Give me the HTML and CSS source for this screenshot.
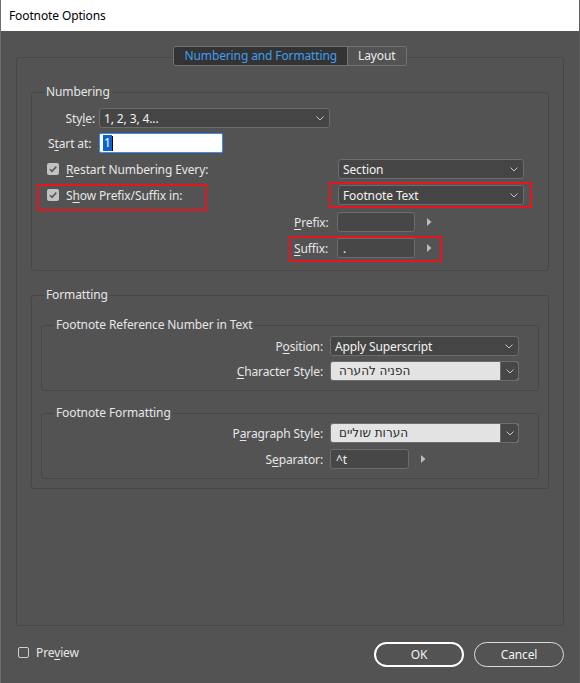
FILE: index.html
```html
<!DOCTYPE html>
<html lang="en">
<head>
<meta charset="utf-8">
<title>Footnote Options</title>
<link rel="stylesheet" href="styles.css">
</head>
<body>
<div class="window">
  <div class="titlebar">Footnote Options</div>
  <div class="dialog">
    <div class="tabs">
      <div class="tabstrip">
        <div class="tab active">Numbering and Formatting</div>
        <div class="tab">Layout</div>
      </div>
    </div>
    <div class="panel">
      <div class="group numbering">
        <div class="legend">Numbering</div>
        <div class="row row-style">
          <span class="lab lab-right">Sty<u>l</u>e:</span>
          <div class="select w-style"><span>1, 2, 3, 4...</span><svg class="chev" width="8" height="5" viewBox="0 0 8 5"><path d="M0.5 0.5 L4 4 L7.5 0.5" /></svg></div>
        </div>
        <div class="row row-start">
          <span class="lab lab-left">S<u>t</u>art at:</span>
          <div class="input focus"><span class="sel">1</span><span class="caret"></span></div>
        </div>
        <div class="row row-check">
          <span class="cb checked"><svg width="12" height="12" viewBox="0 0 12 12"><path d="M2.8 6.2 L5 8.4 L9.3 3.6" /></svg></span>
          <span class="cb-label"><u>R</u>estart Numbering Every:</span>
          <div class="select w-right"><span>Section</span><svg class="chev" width="8" height="5" viewBox="0 0 8 5"><path d="M0.5 0.5 L4 4 L7.5 0.5" /></svg></div>
        </div>
        <div class="row row-check row-show">
          <span class="cb checked"><svg width="12" height="12" viewBox="0 0 12 12"><path d="M2.8 6.2 L5 8.4 L9.3 3.6" /></svg></span>
          <span class="cb-label">S<u>h</u>ow Prefix/Suffix in:</span>
          <div class="select w-right"><span>Footnote Text</span><svg class="chev" width="8" height="5" viewBox="0 0 8 5"><path d="M0.5 0.5 L4 4 L7.5 0.5" /></svg></div>
        </div>
        <div class="row row-affix row-prefix">
          <span class="lab-affix"><u>P</u>refix:</span>
          <div class="input field w-affix"></div>
          <svg class="tri" width="5" height="8" viewBox="0 0 5 8"><path d="M0 0 L4.5 4 L0 8 Z" /></svg>
        </div>
        <div class="row row-affix row-suffix">
          <span class="lab-affix"><u>S</u>uffix:</span>
          <div class="input field w-affix"><span>.</span></div>
          <svg class="tri" width="5" height="8" viewBox="0 0 5 8"><path d="M0 0 L4.5 4 L0 8 Z" /></svg>
        </div>
        <div class="mark mark-show"></div>
        <div class="mark mark-text"></div>
        <div class="mark mark-suffix"></div>
      </div>

      <div class="group formatting">
        <div class="legend">Formatting</div>
        <div class="group sub sub-ref">
          <div class="legend">Footnote Reference Number in Text</div>
          <div class="frow frow-first">
            <span class="flab">P<u>o</u>sition:</span>
            <div class="select"><span>Apply Superscript</span><svg class="chev" width="8" height="5" viewBox="0 0 8 5"><path d="M0.5 0.5 L4 4 L7.5 0.5" /></svg></div>
          </div>
          <div class="frow">
            <span class="flab"><u>C</u>haracter Style:</span>
            <div class="select light"><span class="heb" dir="rtl">הפניה להערה</span><span class="drop"><svg class="chev" width="8" height="5" viewBox="0 0 8 5"><path d="M0.5 0.5 L4 4 L7.5 0.5" /></svg></span></div>
          </div>
        </div>
        <div class="group sub sub-fmt">
          <div class="legend">Footnote Formatting</div>
          <div class="frow frow-first2">
            <span class="flab">P<u>a</u>ragraph Style:</span>
            <div class="select light"><span class="heb" dir="rtl">הערות  שוליים</span><span class="drop"><svg class="chev" width="8" height="5" viewBox="0 0 8 5"><path d="M0.5 0.5 L4 4 L7.5 0.5" /></svg></span></div>
          </div>
          <div class="frow">
            <span class="flab">S<u>e</u>parator:</span>
            <div class="ctl">
              <div class="input field w-sep"><span>^t</span></div>
              <svg class="tri" width="5" height="8" viewBox="0 0 5 8"><path d="M0 0 L4.5 4 L0 8 Z" /></svg>
            </div>
          </div>
        </div>
      </div>
    </div>

    <div class="footer">
      <div class="preview">
        <span class="cb empty"></span>
        <span class="cb-label">Pre<u>v</u>iew</span>
      </div>
      <div class="btn ok">OK</div>
      <div class="btn cancel">Cancel</div>
    </div>
  </div>
</div>
</body>
</html>
```

FILE: styles.css
```css
* {
  box-sizing: border-box;
}

html, body {
  margin: 0;
  padding: 0;
}

body {
  width: 580px;
  height: 683px;
  overflow: hidden;
  background: #535353;
  font-family: "Noto Sans", "Segoe UI", "DejaVu Sans", sans-serif;
  font-size: 12px;
  letter-spacing: -0.12px;
  color: #e6e6e6;
}

u {
  text-decoration: underline;
  text-underline-offset: 2px;
}

.window {
  width: 580px;
  height: 683px;
  border-left: 1px solid #6e6e6e;
  border-right: 1px solid #5e5e5e;
  background: #535353;
}

.titlebar {
  height: 31px;
  line-height: 31px;
  background: #ffffff;
  color: #000000;
  padding-left: 8px;
}

.dialog {
  padding: 15px 15px 0 15px;
}

/* Tabs */
.tabs {
  display: flex;
  justify-content: center;
  margin-bottom: -9px;
  position: relative;
  z-index: 1;
}

.tabstrip {
  display: flex;
  height: 20px;
  border: 1px solid #737373;
  border-radius: 3px;
  overflow: hidden;
  background: #535353;
}

.tab {
  line-height: 18px;
  padding: 0 10px;
  color: #ececec;
}

.tab.active {
  background: #333333;
  color: #3f9ef0;
}

.tab + .tab {
  border-left: 1px solid #737373;
}

/* Panel and groups */
.panel {
  height: 569px;
  border: 1px solid #474747;
  border-radius: 3px;
  padding: 34px 14px 0 14px;
}

.group {
  border: 1px solid #474747;
  border-radius: 3px;
  position: relative;
}

.legend {
  width: fit-content;
  margin: -9px 0 0 12px;
  padding: 0 2px;
  line-height: 16px;
  background: #535353;
  color: #e6e6e6;
}

.numbering {
  padding-bottom: 12px;
}

.row {
  display: flex;
  align-items: center;
  height: 20px;
}

.row-style {
  margin-top: 8px;
}

.row-start {
  margin-top: 5px;
}

.row-check {
  margin-top: 6px;
  padding-left: 15px;
  padding-right: 24px;
}

.row-prefix {
  margin-top: 7px;
}

.row-suffix {
  margin-top: 6px;
}

.row-affix {
  margin-left: 262px;
}

.lab {
  width: 67px;
  flex: none;
}

.lab-right {
  text-align: right;
  padding-right: 4px;
}

.lab-left {
  padding-left: 16px;
}

.lab-affix {
  width: 43px;
  flex: none;
}

/* Controls */
.select {
  display: flex;
  align-items: center;
  justify-content: space-between;
  height: 20px;
  background: #454545;
  border: 1px solid #6c6c6c;
  border-radius: 3px;
  padding: 0 5px 0 4px;
  color: #f2f2f2;
  white-space: nowrap;
}

.w-style {
  width: 231px;
}

.w-right {
  width: 186px;
  margin-left: auto;
}

.chev {
  display: block;
  flex: none;
}

.chev path {
  fill: none;
  stroke: #c4c4c4;
  stroke-width: 1;
}

.select.light {
  background: #e3e3e3;
  color: #2a2a2a;
  padding: 0 0 0 8px;
  overflow: hidden;
}

.drop {
  display: flex;
  align-items: center;
  justify-content: center;
  width: 18px;
  height: 100%;
  background: #474747;
  border-left: 1px solid #6c6c6c;
}

.input {
  display: flex;
  align-items: center;
  height: 20px;
}

.input.focus {
  width: 124px;
  background: #ffffff;
  border: 1px solid #3d8ee6;
  border-radius: 2px;
  padding-left: 3px;
}

.sel {
  background: #0a64d0;
  color: #ffffff;
  line-height: 16px;
  padding: 0 1px;
}

.caret {
  width: 1px;
  height: 15px;
  background: #000000;
}

.input.field {
  background: #474747;
  border: 1px solid #6c6c6c;
  border-radius: 3px;
  padding-left: 5px;
  color: #f2f2f2;
}

.w-affix {
  width: 78px;
}

.w-sep {
  width: 79px;
}

.tri {
  display: block;
  margin-left: 12px;
  flex: none;
}

.tri path {
  fill: #bcbcbc;
}

/* Checkboxes */
.cb {
  display: block;
  flex: none;
  width: 12px;
  height: 12px;
  border-radius: 2px;
}

.cb.checked {
  background: #c2c2c2;
}

.cb.checked svg {
  display: block;
}

.cb.checked path {
  fill: none;
  stroke: #5a5a5a;
  stroke-width: 1.6;
}

.cb.empty {
  width: 11px;
  height: 11px;
  border: 1px solid #cfcfcf;
}

.cb-label {
  margin-left: 7px;
  white-space: nowrap;
}

/* Formatting */
.formatting {
  margin-top: 24px;
  padding-bottom: 9px;
}

.sub {
  margin: 0 9px;
  padding-bottom: 9px;
}

.sub-ref {
  margin-top: 22px;
}

.sub-fmt {
  margin-top: 22px;
}

.frow {
  display: grid;
  grid-template-columns: 1fr 189px;
  column-gap: 7px;
  align-items: center;
  height: 20px;
  margin-top: 5px;
  padding-right: 19px;
}

.frow-first {
  margin-top: 3px;
}

.frow-first2 {
  margin-top: 2px;
}

.sub-fmt .frow + .frow {
  margin-top: 6px;
}

.flab {
  text-align: right;
  white-space: nowrap;
}

.ctl {
  display: flex;
  align-items: center;
}

.heb {
  font-family: "DejaVu Sans", "Noto Sans", sans-serif;
  font-size: 12px;
  letter-spacing: 0;
}

/* Annotation marks */
.mark {
  position: absolute;
  border: 2px solid #e8141e;
}

.mark-show {
  left: 5px;
  top: 91px;
  width: 170px;
  height: 27px;
}

.mark-text {
  left: 297px;
  top: 89px;
  width: 203px;
  height: 26px;
}

.mark-suffix {
  left: 257px;
  top: 143px;
  width: 153px;
  height: 26px;
}

/* Footer */
.footer {
  display: flex;
  align-items: center;
  height: 25px;
  margin-top: 16px;
}

.preview {
  display: flex;
  align-items: center;
  align-self: flex-start;
  height: 16px;
  margin-top: 2px;
  margin-left: 2px;
}

.btn {
  display: flex;
  align-items: center;
  justify-content: center;
  width: 90px;
  height: 25px;
  border-radius: 13px;
  border: 1px solid #dcdcdc;
  color: #f2f2f2;
}

.btn.ok {
  margin-left: auto;
  border: 2px solid #ffffff;
}

.btn.cancel {
  margin-left: 10px;
}
```
